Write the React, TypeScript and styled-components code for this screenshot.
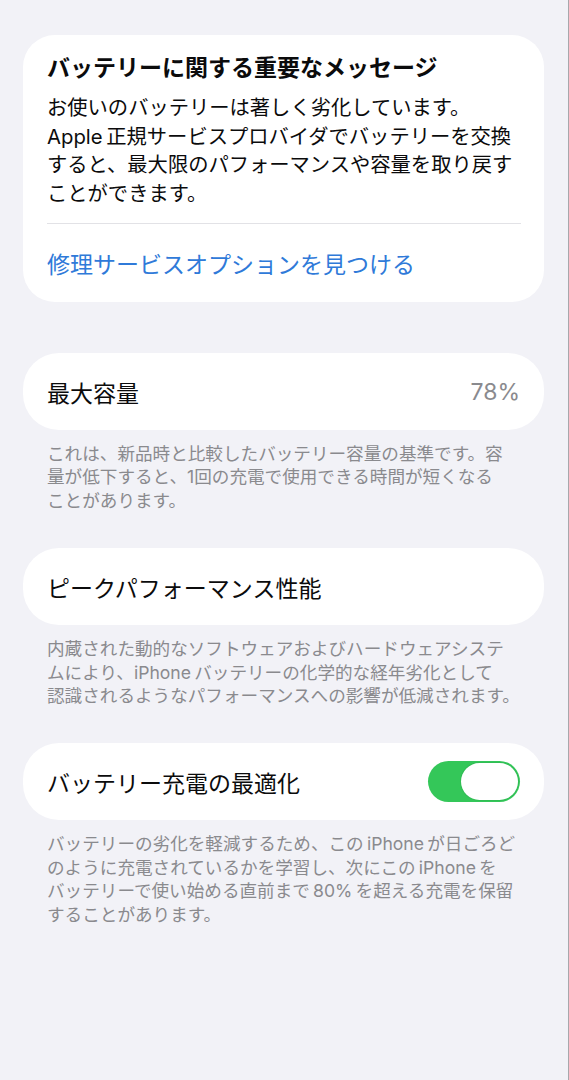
import * as React from "react"
import styled, { createGlobalStyle } from "styled-components"

const GlobalStyle = createGlobalStyle`
  body {
    margin: 0;
    background: #f2f2f7;
    font-family: "Inter", "Noto Sans CJK JP", sans-serif;
    -webkit-font-smoothing: antialiased;
  }
`

const Page = styled.div`
  box-sizing: border-box;
  min-height: 1080px;
  padding: 35px 24px 0 23px;
  border-right: 1px solid #a8a8ac;
  display: flex;
  flex-direction: column;
  color: #0b0b0c;
`

const NoticeCard = styled.section`
  background: #ffffff;
  border-radius: 32px;
  padding: 18px 23px 0 24px;
`

const NoticeTitle = styled.div`
  font-size: 23px;
  line-height: 30px;
  font-weight: 700;
  white-space: nowrap;
`

const NoticeBody = styled.div`
  margin-top: 11px;
  font-size: 20.3px;
  line-height: 28.5px;
  white-space: nowrap;
`

const Divider = styled.div`
  margin-top: 15px;
  height: 1px;
  background: #e2e2e6;
`

const LinkRow = styled.div`
  height: 78px;
  display: flex;
  align-items: center;
  font-size: 23px;
  color: #2f7ad9;
  cursor: pointer;
`

const Row = styled.div<{ $top: number }>`
  margin-top: ${(p) => p.$top}px;
  height: 77px;
  box-sizing: border-box;
  padding: 0 24px;
  background: #ffffff;
  border-radius: 36px;
  display: flex;
  align-items: center;
  justify-content: space-between;
  font-size: 23px;
`

const RowValue = styled.span`
  color: #8a8a8e;
`

const Footer = styled.div`
  margin-top: 12px;
  padding: 0 24px;
  font-size: 17.6px;
  line-height: 23.4px;
  color: #8a8a8e;
  white-space: nowrap;
`

const Toggle = styled.div<{ $on: boolean }>`
  width: 92px;
  height: 41px;
  border-radius: 21px;
  background: ${(p) => (p.$on ? "#34c759" : "#e5e5ea")};
  padding: 2px;
  box-sizing: border-box;
  display: flex;
  justify-content: ${(p) => (p.$on ? "flex-end" : "flex-start")};
  cursor: pointer;
`

const Knob = styled.div`
  width: 57px;
  height: 37px;
  border-radius: 19px;
  background: #ffffff;
  box-shadow: 0 0 0 1px rgba(40, 160, 70, 0.25);
`

const thin = "\u2009"

export default function App() {
  const [optimized, setOptimized] = React.useState(true)

  return (
    <>
      <GlobalStyle />
      <Page>
        <NoticeCard>
          <NoticeTitle>バッテリーに関する重要なメッセージ</NoticeTitle>
          <NoticeBody>
            お使いのバッテリーは著しく劣化しています。
            <br />
            Apple{thin}正規サービスプロバイダでバッテリーを交換
            <br />
            すると、最大限のパフォーマンスや容量を取り戻す
            <br />
            ことができます。
          </NoticeBody>
          <Divider />
          <LinkRow>修理サービスオプションを見つける</LinkRow>
        </NoticeCard>

        <Row $top={51}>
          <span>最大容量</span>
          <RowValue>78%</RowValue>
        </Row>
        <Footer>
          これは、新品時と比較したバッテリー容量の基準です。容
          <br />
          量が低下すると、1回の充電で使用できる時間が短くなる
          <br />
          ことがあります。
        </Footer>

        <Row $top={36}>
          <span>ピークパフォーマンス性能</span>
        </Row>
        <Footer>
          内蔵された動的なソフトウェアおよびハードウェアシステ
          <br />
          ムにより、iPhone{thin}バッテリーの化学的な経年劣化として
          <br />
          認識されるようなパフォーマンスへの影響が低減されます。
        </Footer>

        <Row $top={36}>
          <span>バッテリー充電の最適化</span>
          <Toggle $on={optimized} onClick={() => setOptimized(!optimized)}>
            <Knob />
          </Toggle>
        </Row>
        <Footer>
          バッテリーの劣化を軽減するため、この{thin}iPhone{thin}が日ごろど
          <br />
          のように充電されているかを学習し、次にこの{thin}iPhone{thin}を
          <br />
          バッテリーで使い始める直前まで{thin}80%{thin}を超える充電を保留
          <br />
          することがあります。
        </Footer>
      </Page>
    </>
  )
}
